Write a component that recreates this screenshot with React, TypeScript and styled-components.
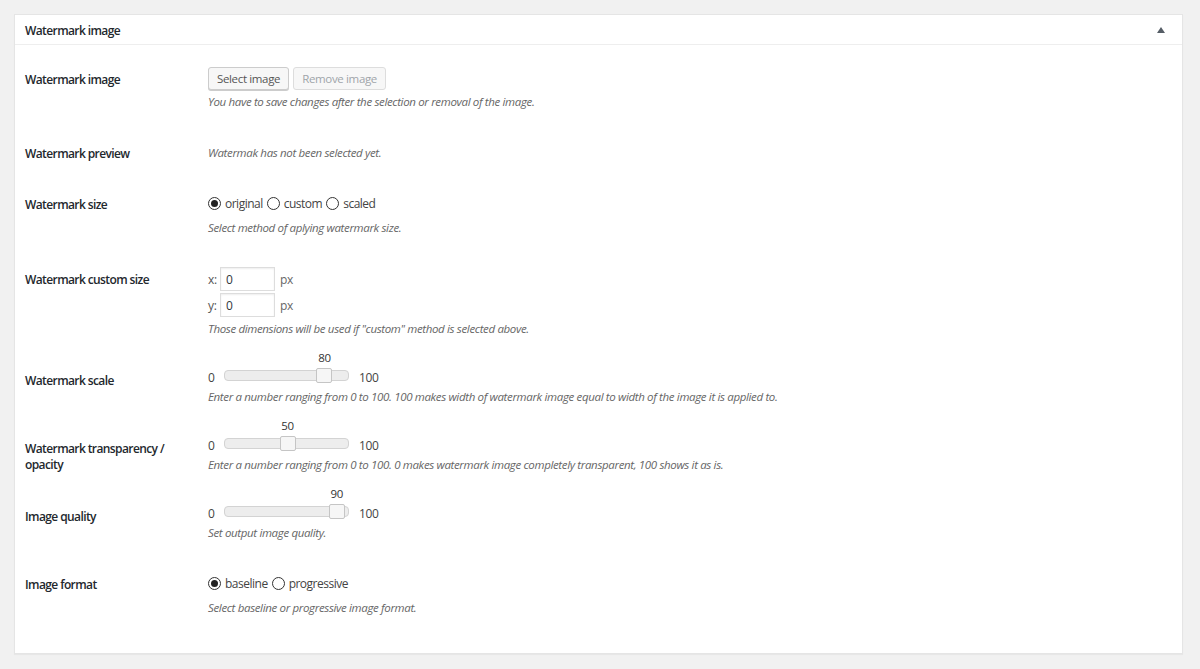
import * as React from 'react';
import styled, { createGlobalStyle } from 'styled-components';

const GlobalStyle = createGlobalStyle`
  body {
    margin: 0;
    background: #f1f1f1;
    font-family: "Open Sans", "Noto Sans", sans-serif;
    color: #444;
  }
`;

const Page = styled.div`
  padding: 14px 17px 14px 14px;
`;

const Postbox = styled.div`
  background: #fff;
  border: 1px solid #e5e5e5;
  box-shadow: 0 1px 1px rgba(0, 0, 0, 0.04);
`;

const PostboxHeader = styled.div`
  display: flex;
  align-items: center;
  justify-content: space-between;
  box-sizing: border-box;
  height: 30px;
  padding: 1px 17px 0 10px;
  border-bottom: 1px solid #eee;
`;

const PostboxTitle = styled.h2`
  margin: 0;
  font-size: 12px;
  font-weight: 600;
  letter-spacing: -0.6px;
  color: #23282d;
`;

const ToggleArrow = styled.svg`
  width: 8px;
  height: 6px;
  display: block;
`;

const Inside = styled.div`
  padding: 6px 10px 22px;
`;

const Row = styled.div`
  display: flex;
  align-items: flex-start;
`;

const Label = styled.div`
  width: 173px;
  flex: none;
  padding: 21px 10px 0 0;
  font-size: 12px;
  line-height: 16px;
  font-weight: 600;
  letter-spacing: -0.6px;
  color: #23282d;
`;

const Field = styled.div`
  flex: 1;
  padding: 15px 0;
  font-size: 12px;
  line-height: 17px;
  letter-spacing: -0.35px;
`;

const Desc = styled.p<{ $mt?: number }>`
  margin: ${p => (p.$mt ?? 4)}px 0 0;
  font-size: 11.5px;
  line-height: 17px;
  letter-spacing: -0.35px;
  font-style: italic;
  color: #666;
`;

const ButtonRow = styled.div`
  display: flex;
  gap: 4px;
  padding-top: 1px;
`;

const Button = styled.button`
  height: 23px;
  padding: 0 8px 1px;
  font-family: inherit;
  font-size: 11.5px;
  letter-spacing: -0.35px;
  line-height: 21px;
  border-radius: 3px;
  border: 1px solid #ccc;
  background: #f7f7f7;
  color: #555;
  box-shadow: 0 1px 0 #ccc;
  cursor: pointer;

  &:disabled {
    color: #a0a5aa;
    border-color: #ddd;
    box-shadow: none;
    cursor: default;
  }
`;

const RadioGroup = styled.div`
  display: flex;
  align-items: center;
  height: 24px;
`;

const RadioLabel = styled.label`
  display: inline-flex;
  align-items: center;
  gap: 4px;
  margin-right: 4px;
  letter-spacing: -0.5px;
  color: #444;
`;

const RadioCircle = styled.span<{ $checked?: boolean }>`
  width: 11px;
  height: 11px;
  border: 1px solid #333;
  border-radius: 50%;
  display: inline-flex;
  align-items: center;
  justify-content: center;

  &::after {
    content: '';
    width: 7px;
    height: 7px;
    border-radius: 50%;
    background: #222;
    display: ${p => (p.$checked ? 'block' : 'none')};
  }
`;

const InputLine = styled.div`
  display: flex;
  align-items: center;
  height: 26px;
`;

const AxisLabel = styled.span`
  width: 12px;
  color: #555;
`;

const SmallInput = styled.input`
  box-sizing: border-box;
  width: 55px;
  height: 24px;
  padding: 0 5px;
  border: 1px solid #ddd;
  box-shadow: inset 0 1px 2px rgba(0, 0, 0, 0.07);
  font-family: inherit;
  font-size: 12px;
  color: #32373c;
  outline: none;
`;

const Unit = styled.span`
  margin-left: 5px;
  color: #666;
`;

const SliderLine = styled.div`
  display: flex;
  align-items: center;
  height: 17px;
  padding-top: 2px;
  margin-bottom: -2px;
  color: #444;
`;

const SliderEnd = styled.span<{ $w: number }>`
  width: ${p => p.$w}px;
  flex: none;
`;

const Track = styled.div`
  position: relative;
  box-sizing: border-box;
  width: 125px;
  height: 11px;
  margin: -5px 10px 0 0;
  border: 1px solid #d3d3d3;
  border-radius: 4px;
  background: #ededed;
`;

const Handle = styled.span`
  position: absolute;
  top: -3px;
  box-sizing: border-box;
  width: 16px;
  height: 15px;
  margin-left: -7px;
  border: 1px solid #c5c5c5;
  border-radius: 2px;
  background: #f6f6f6;
`;

const ValueTag = styled.span`
  position: absolute;
  top: -22px;
  width: 30px;
  margin-left: -14px;
  text-align: center;
  font-size: 11.5px;
  line-height: 17px;
  color: #333;
`;

const Slider = ({ value }: { value: number }) => (
  <SliderLine>
    <SliderEnd $w={16}>0</SliderEnd>
    <Track>
      <ValueTag style={{ left: `${value}%` }}>{value}</ValueTag>
      <Handle style={{ left: `${value}%` }} />
    </Track>
    <span>100</span>
  </SliderLine>
);

const Radio = ({ label, checked }: { label: string; checked?: boolean }) => (
  <RadioLabel>
    <RadioCircle $checked={checked} />
    {label}
  </RadioLabel>
);

export default function App() {
  return (
    <Page>
      <GlobalStyle />
      <Postbox>
        <PostboxHeader>
          <PostboxTitle>Watermark image</PostboxTitle>
          <ToggleArrow viewBox="0 0 8 6">
            <polygon points="4,0 8,6 0,6" fill="#555d66" />
          </ToggleArrow>
        </PostboxHeader>
        <Inside>
          <Row>
            <Label>Watermark image</Label>
            <Field>
              <ButtonRow>
                <Button>Select image</Button>
                <Button disabled>Remove image</Button>
              </ButtonRow>
              <Desc $mt={3}>You have to save changes after the selection or removal of the image.</Desc>
            </Field>
          </Row>
          <Row>
            <Label>Watermark preview</Label>
            <Field>
              <Desc>Watermak has not been selected yet.</Desc>
            </Field>
          </Row>
          <Row>
            <Label>Watermark size</Label>
            <Field>
              <RadioGroup>
                <Radio label="original" checked />
                <Radio label="custom" />
                <Radio label="scaled" />
              </RadioGroup>
              <Desc>Select method of aplying watermark size.</Desc>
            </Field>
          </Row>
          <Row>
            <Label>Watermark custom size</Label>
            <Field>
              <InputLine>
                <AxisLabel>x:</AxisLabel>
                <SmallInput defaultValue="0" />
                <Unit>px</Unit>
              </InputLine>
              <InputLine>
                <AxisLabel>y:</AxisLabel>
                <SmallInput defaultValue="0" />
                <Unit>px</Unit>
              </InputLine>
              <Desc $mt={2}>Those dimensions will be used if "custom" method is selected above.</Desc>
            </Field>
          </Row>
          <Row>
            <Label>Watermark scale</Label>
            <Field>
              <Slider value={80} />
              <Desc>Enter a number ranging from 0 to 100. 100 makes width of watermark image equal to width of the image it is applied to.</Desc>
            </Field>
          </Row>
          <Row>
            <Label>Watermark transparency / opacity</Label>
            <Field>
              <Slider value={50} />
              <Desc>Enter a number ranging from 0 to 100. 0 makes watermark image completely transparent, 100 shows it as is.</Desc>
            </Field>
          </Row>
          <Row>
            <Label>Image quality</Label>
            <Field>
              <Slider value={90} />
              <Desc>Set output image quality.</Desc>
            </Field>
          </Row>
          <Row>
            <Label>Image format</Label>
            <Field>
              <RadioGroup>
                <Radio label="baseline" checked />
                <Radio label="progressive" />
              </RadioGroup>
              <Desc>Select baseline or progressive image format.</Desc>
            </Field>
          </Row>
        </Inside>
      </Postbox>
    </Page>
  );
}
